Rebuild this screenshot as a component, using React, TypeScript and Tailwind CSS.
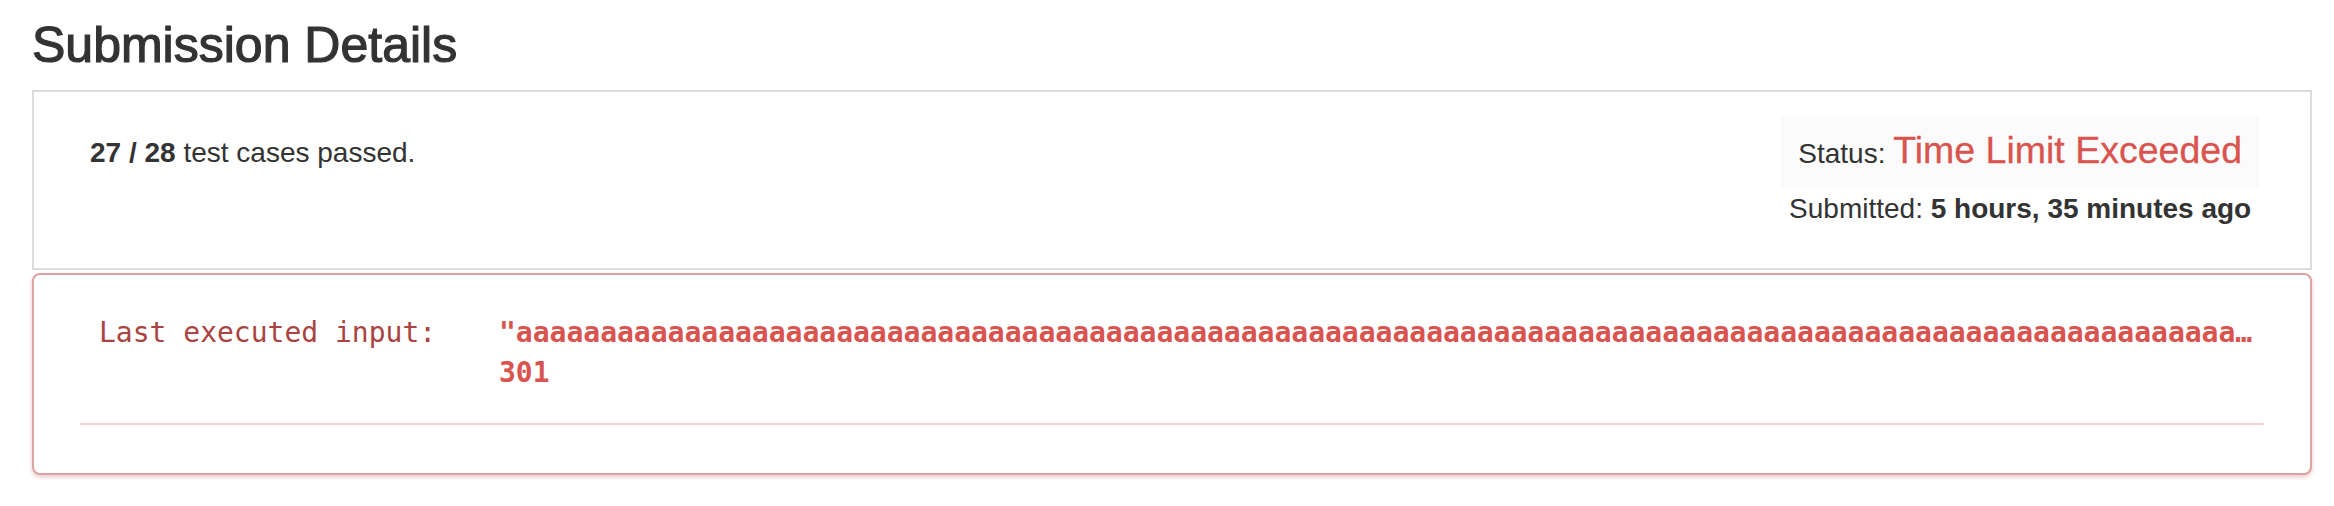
import React from "react";

const sans = "font-['Liberation_Sans',Arial,sans-serif]";
const mono = "font-['DejaVu_Sans_Mono','Liberation_Mono',monospace]";

const lastInput = '"' + "a".repeat(300) + '"';

export default function App() {
  return (
    <div className={`${sans} min-h-[506px] w-[2334px] bg-white text-[#333]`}>
      <div className="ml-[32px] w-[2280px]">
        <h3 className="mt-[18px] text-[50px] leading-[55px] font-medium [-webkit-text-stroke:1.2px_#333]">
          Submission Details
        </h3>

        {/* Summary panel */}
        <div className="mt-[17px] flex h-[180px] items-start justify-between border-2 border-[#dddddd] pl-[56px] pr-[51px] pt-[24px]">
          <div className="mt-[17px] text-[28px] leading-[40px]">
            <b>27 / 28</b> test cases passed.
          </div>

          <div className="flex flex-col items-center text-[28px]">
            <div className="h-[73px] bg-[#fbfbfb] px-[17px] pt-[14px] leading-[41px] whitespace-nowrap">
              Status:{" "}
              <span className="text-[37.5px] text-[#d9534f] [-webkit-text-stroke:0.3px_#d9534f]">Time Limit Exceeded</span>
            </div>
            <div className="leading-[40px] whitespace-nowrap">
              Submitted: <b>5 hours, 35 minutes ago</b>
            </div>
          </div>
        </div>

        {/* Last executed input panel */}
        <div className="mt-[3px] h-[202px] rounded-[8px] border-2 border-[#dba3a3] bg-white px-[46px] pt-[38px] shadow-[0_2px_4px_rgba(185,74,72,0.3)]">
          <div className={`${mono} flex pl-[19px] text-[28px] leading-[40px]`}>
            <div className="w-[400px] shrink-0 text-[#a94442]">Last executed input:</div>
            <div className="w-[1756px] font-bold text-[#d9534f]">
              <div className="overflow-hidden text-ellipsis whitespace-nowrap">{lastInput}</div>
              <div>301</div>
            </div>
          </div>
          <div className="mt-[30px] h-[2px] bg-[#f3d2d2]" />
        </div>
      </div>
    </div>
  );
}
